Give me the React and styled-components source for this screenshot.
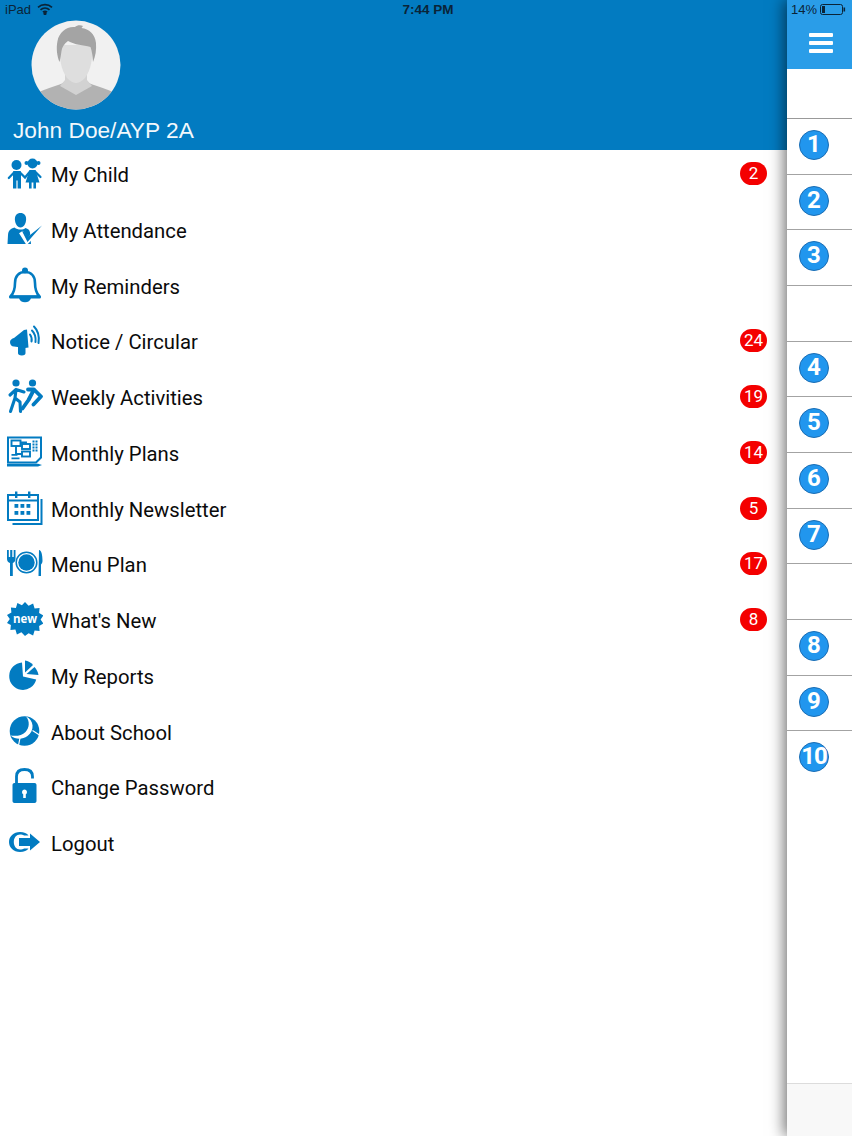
import styled, { createGlobalStyle } from 'styled-components'

const BLUE = '#027bc1'

const Global = createGlobalStyle`
  html, body {
    margin: 0;
    padding: 0;
    background: #fff;
    overflow: hidden;
  }
  * {
    box-sizing: border-box;
  }
`

const Page = styled.div`
  position: relative;
  display: flex;
  width: 852px;
  height: 1136px;
  overflow: hidden;
  font-family: 'Liberation Sans', Arial, sans-serif;
`

const StatusBar = styled.div`
  position: absolute;
  top: 0;
  left: 0;
  right: 0;
  height: 18px;
  z-index: 3;
  display: flex;
  align-items: center;
  padding: 0 5px;
  font-size: 13px;
  color: #0a2438;
`

const StatusLeft = styled.div`
  display: flex;
  align-items: center;
  gap: 6px;
  width: 393px;
`

const StatusTime = styled.div`
  width: 60px;
  text-align: center;
  font-weight: 700;
  font-size: 13.5px;
  white-space: nowrap;
`

const StatusRight = styled.div`
  display: flex;
  align-items: center;
  gap: 3px;
  margin-left: auto;
  padding-right: 1px;
`

const Drawer = styled.div`
  flex: 0 0 787px;
  display: flex;
  flex-direction: column;
`

const Header = styled.header`
  height: 150px;
  background: ${BLUE};
  padding: 20px 0 0 13px;
`

const Avatar = styled.svg`
  display: block;
  width: 90px;
  height: 90px;
  margin-left: 18px;
`

const UserName = styled.div`
  margin-top: 7px;
  font-size: 22.7px;
  line-height: 26px;
  color: #f2f8fc;
`

const Menu = styled.nav`
  display: flex;
  flex-direction: column;
`

const Row = styled.div`
  height: 55.75px;
  display: flex;
  align-items: flex-start;
  padding: 5px 20px 0 7px;
  gap: 8px;
`

const Icon = styled.svg`
  flex: 0 0 36px;
  width: 36px;
  height: 36px;
  fill: ${BLUE};
`

const Label = styled.span`
  font-family: Roboto, 'Liberation Sans', sans-serif;
  font-size: 20.3px;
  line-height: 40px;
  color: #0b0b0b;
`

const Badge = styled.span`
  margin-left: auto;
  margin-top: 7px;
  min-width: 27px;
  height: 23px;
  border-radius: 12px;
  background: #f40000;
  color: #fff;
  font-family: Roboto, 'Liberation Sans', sans-serif;
  font-size: 17px;
  line-height: 23px;
  text-align: center;
`

const Rail = styled.aside`
  flex: 0 0 65px;
  display: flex;
  flex-direction: column;
  background: #fff;
  box-shadow: -3px 0 14px rgba(0, 0, 0, 0.55);
  z-index: 2;
`

const MenuButton = styled.div`
  height: 69px;
  background: #2a9de8;
  display: flex;
  align-items: flex-end;
  padding: 0 0 16px 22px;
`

const Bars = styled.div`
  width: 24px;
  height: 20px;
  display: flex;
  flex-direction: column;
  justify-content: space-between;

  span {
    height: 4px;
    border-radius: 1px;
    background: #fff;
  }
`

const RailSpacer = styled.div`
  height: 49.9px;
  border-bottom: 1px solid #999;
`

const RailRow = styled.div`
  height: 55.7px;
  display: flex;
  align-items: flex-start;
  padding: 11px 0 0 12px;
  border-bottom: ${(p) => (p.$last ? 'none' : '1px solid #a3a3a3')};
`

const Dot = styled.div`
  width: 30px;
  height: 30px;
  border-radius: 50%;
  background: #2196ee;
  border: 1px solid #1a6db4;
  color: #fff;
  font-family: Roboto, 'Liberation Sans', sans-serif;
  font-size: 24px;
  font-weight: 700;
  line-height: 27px;
  text-align: center;
  letter-spacing: ${(p) => (p.$wide ? '-1px' : '0')};
`

const RailFooter = styled.div`
  margin-top: auto;
  height: 53px;
  background: #f8f8f8;
  border-top: 1px solid #dcdcdc;
`

const Child = () => (
  <Icon viewBox="0 0 36 36">
    <circle cx="9.500" cy="10" r="5" />
    <rect x="6" y="16" width="8" height="9.500" rx="1" />
    <rect x="6" y="24" width="3.400" height="9.500" />
    <rect x="10.600" y="24" width="3.400" height="9.500" />
    <circle cx="25.500" cy="8.500" r="5" />
    <circle cx="19.500" cy="8" r="2" />
    <circle cx="31.500" cy="8" r="2" />
    <path d="M22.500 15h6l4 12.500H18.500Z" />
    <rect x="22" y="26" width="2.600" height="7.500" />
    <rect x="26.400" y="26" width="2.600" height="7.500" />
    <path
      d="M7 17.500L1.800 23M13 17.500L18 22.500L23 16.500M28 16.500L33.500 22"
      fill="none"
      stroke={BLUE}
      strokeWidth="2.200"
      strokeLinecap="round"
    />
  </Icon>
)

const Attendance = () => (
  <Icon viewBox="0 0 36 36">
    <path d="M13.500 2c3.600 0 5.800 2.500 5.600 6.500-.2 4-2.200 8-5.600 8s-5.400-4-5.600-8C7.700 4.500 9.900 2 13.500 2Z" />
    <path d="M7.500 16.500c1.700 1.500 3.700 2 6 2 2.300 0 3.700-.5 5-1.500 2.500.8 4 2 4.500 4.500l1 11.500H.5l.5-9c.3-4.500 2.500-6.500 6.500-7.500Z" />
    <path d="M14 21l6 9.500L35 15" fill="none" stroke="#fff" strokeWidth="4.600" />
    <path d="M15 20l2 .5 3.500 5.500L35 14.500 20.500 31Z" />
  </Icon>
)

const Bell = () => (
  <Icon viewBox="0 0 36 36">
    <path
      d="M3.500 29.500C7 26 8 22 8 16 8 9 12 5 18 5s10 4 10 11c0 6 1 10 4.500 13.500Z"
      fill="none"
      stroke={BLUE}
      strokeWidth="2.600"
      strokeLinejoin="round"
    />
    <circle cx="18" cy="3.500" r="3" />
    <rect x="2" y="28.400" width="32" height="3" rx="1.500" />
    <path d="M12 31h12c-.5 2.700-3 4.300-6 4.300s-5.500-1.600-6-4.300Z" />
  </Icon>
)

const Megaphone = () => (
  <Icon viewBox="0 0 36 36">
    <path d="M3 20c0-2 2-3.500 4-4l10-8 3-.5 1.500 18-3.500.5-11-1.500C4.500 24.500 3 22.500 3 20Z" />
    <path d="M11 24h7.500v7c0 1.500-1 2.500-3.700 2.500S11 32.500 11 31Z" />
    <g fill="none" stroke={BLUE} strokeWidth="2" strokeLinecap="round">
      <path d="M23 12.500c1.500 2 2 4.500 1.500 7" />
      <path d="M25 8.500c3 3 4 7 3.500 11.500" />
      <path d="M27 4.500c4 4 5.500 10 4.500 16.500" />
    </g>
  </Icon>
)

const Activities = () => (
  <Icon viewBox="0 0 36 36">
    <circle cx="9" cy="5" r="3.600" />
    <circle cx="25.500" cy="5" r="3.600" />
    <path
      d="M9 11.500L8 20L3.500 33.500M8 20L13 24L13.500 33.500M9 11.500L3 17M9 11.500L17 14"
      fill="none"
      stroke={BLUE}
      strokeWidth="3.100"
      strokeLinecap="round"
      strokeLinejoin="round"
    />
    <path
      d="M21 11.500H27L21.500 22L15.500 30.500M27 11.500L34 18.500L26.500 26.500"
      fill="none"
      stroke={BLUE}
      strokeWidth="3.800"
      strokeLinecap="round"
      strokeLinejoin="round"
    />
  </Icon>
)

const Plans = () => (
  <Icon viewBox="0 0 36 36">
    <path d="M1 3.500h33v20l-5 5H1Z" fill="none" stroke={BLUE} strokeWidth="2" />
    <g fill="none" stroke={BLUE} strokeWidth="1.900">
      <rect x="4.500" y="6.500" width="9" height="5.500" />
      <rect x="15" y="10" width="8" height="5" />
      <rect x="15" y="17.500" width="8" height="5" />
      <path d="M13.500 8.500H19V10M9 12V20H15" />
    </g>
    {[6.500, 9.500, 12.500, 15.500].map((y) =>
      [25.500, 28.500].map((x) => <rect key={`${x}-${y}`} x={x} y={y} width="2" height="2" />)
    )}
    <path d="M4.500 20h6v1.700h-6ZM4.500 23.500h8v1.700h-8Z" />
    <path d="M0 29.800h31l4 1.300-4 1.300H0Z" />
  </Icon>
)

const Calendar = () => (
  <Icon viewBox="0 0 36 36">
    <g fill="none" stroke={BLUE} strokeWidth="2">
      <rect x="1" y="5" width="30" height="25" />
      <path d="M34.500 9v25H5.500" />
      <path d="M1 10.500h30" />
    </g>
    <rect x="8" y="1.500" width="2.400" height="6.500" />
    <rect x="21" y="1.500" width="2.400" height="6.500" />
    {[7.500, 13.500, 19.500].map((x) =>
      [14, 21].map((y) => <rect key={`${x}-${y}`} x={x} y={y} width="3.800" height="3.800" />)
    )}
  </Icon>
)

const MenuPlan = () => (
  <Icon viewBox="0 0 36 36">
    <path d="M0 5h1.800v7h1.400V5h2.100v7h1.400V5H8.500v9c0 2.200-1.500 3.500-2.700 4v13H3V18C1.500 17.500 0 16.200 0 14Z" />
    <circle cx="19.500" cy="17.500" r="10.300" fill="none" stroke={BLUE} strokeWidth="1.500" />
    <circle cx="19.500" cy="17.500" r="8.200" />
    <path d="M32 5c2.500 0 3.500 5 3.500 11 0 2-1 3-1.500 3.500V31h-2.500Z" />
  </Icon>
)

const NewBadge = () => (
  <Icon viewBox="0 0 36 36">
    <path d="M18 1l3.600 3.800 4.500-2.300 1.500 4.900 5-.3-.5 5 4.300 2.400-2.800 4 2.800 4-4.300 2.400.5 5-5-.3-1.500 4.900-4.500-2.300L18 35l-3.600-3.800-4.500 2.300-1.500-4.900-5 .3.500-5L0 22l2.800-4L0 14l4.400-2.400-.5-5 5 .3 1.500-4.900 4.500 2.300Z" />
    <text
      x="18"
      y="21.500"
      textAnchor="middle"
      fontFamily="'Open Sans', sans-serif"
      fontSize="11.500"
      fontWeight="700"
      fill="#fff"
    >
      new
    </text>
  </Icon>
)

const Reports = () => (
  <Icon viewBox="0 0 36 36">
    <path d="M15 5.500A13.700 13.700 0 1 0 29.200 22.500L16 19.500Z" />
    <path d="M18 3.500V15.500L26 8C24 5.500 21 4 18 3.500Z" />
    <path d="M19.500 17L27.500 10C29.500 12 31 15 31.500 18Z" />
  </Icon>
)

const About = () => (
  <Icon viewBox="0 0 36 36">
    <circle cx="17.500" cy="18" r="14.800" />
    <path d="M19 3.500c8 3.500 9 14 1.500 19.500-5.500 4-12 3.500-17-.5 6 1 11.500 0 15-3.500 4-4 4.500-11 .5-15.500Z" fill="#fff" />
    <path d="M13 25L11.500 32.500M25.500 17.500L32.500 22" stroke="#fff" strokeWidth="1.200" fill="none" />
  </Icon>
)

const Lock = () => (
  <Icon viewBox="0 0 36 36">
    <path
      d="M9.500 16V8.500C9.500 4 12.500 1.500 17.500 1.500s8 2.500 8 7v2"
      fill="none"
      stroke={BLUE}
      strokeWidth="2.800"
    />
    <path
      fillRule="evenodd"
      d="M7.500 15h20c1.200 0 2 .8 2 2v16c0 1.200-.8 2-2 2h-20c-1.200 0-2-.8-2-2V17c0-1.200.8-2 2-2ZM17.500 21.500a2.600 2.600 0 0 0-1.300 4.800V30h2.600v-3.700A2.600 2.600 0 0 0 17.500 21.500Z"
    />
  </Icon>
)

const Logout = () => (
  <Icon viewBox="0 0 36 36">
    <path d="M21.500 11.500C20 9.500 17 8 13 8 6.500 8 2 12.500 2 18s4.500 10 11 10c4 0 7-1.500 8.500-3.500h-4.500c-1 .7-2.300 1-4 1-3.500 0-6.200-3-6.200-7.500s2.700-7.500 6.200-7.500c1.700 0 3 .3 4 1Z" />
    <path d="M12 14h11V9.500L33 18l-10 8.500V22H12Z" />
  </Icon>
)

const WifiIcon = () => (
  <svg width="16" height="12" viewBox="0 0 16 12" fill="none" stroke="#0a2438" strokeWidth="1.700">
    <path d="M1 4.300c4-3.600 10-3.600 14 0M3.500 6.800c2.600-2.200 6.400-2.200 9 0M5.900 9.100c1.300-1 2.900-1 4.200 0" />
    <circle cx="8" cy="10.500" r="0.800" fill="#0a2438" />
  </svg>
)

const Battery = () => (
  <svg width="26" height="11" viewBox="0 0 26 11">
    <rect x="0.500" y="0.500" width="22" height="10" rx="2" fill="none" stroke="#0a2438" />
    <rect x="2" y="2" width="3" height="7" fill="#0a2438" />
    <rect x="23.500" y="3.500" width="1.600" height="4" fill="#0a2438" />
  </svg>
)

const items = [
  { label: 'My Child', icon: Child, count: 2 },
  { label: 'My Attendance', icon: Attendance },
  { label: 'My Reminders', icon: Bell },
  { label: 'Notice / Circular', icon: Megaphone, count: 24 },
  { label: 'Weekly Activities', icon: Activities, count: 19 },
  { label: 'Monthly Plans', icon: Plans, count: 14 },
  { label: 'Monthly Newsletter', icon: Calendar, count: 5 },
  { label: 'Menu Plan', icon: MenuPlan, count: 17 },
  { label: "What's New", icon: NewBadge, count: 8 },
  { label: 'My Reports', icon: Reports },
  { label: 'About School', icon: About },
  { label: 'Change Password', icon: Lock },
  { label: 'Logout', icon: Logout },
]

const railRows = [1, 2, 3, null, 4, 5, 6, 7, null, 8, 9, 10]

const App = () => (
  <Page>
    <Global />
    <StatusBar>
      <StatusLeft>
        iPad
        <WifiIcon />
      </StatusLeft>
      <StatusTime>7:44 PM</StatusTime>
      <StatusRight>
        14%
        <Battery />
      </StatusRight>
    </StatusBar>
    <Drawer>
      <Header>
        <Avatar viewBox="0 0 90 90">
          <defs>
            <clipPath id="face">
              <circle cx="45" cy="45" r="44.500" />
            </clipPath>
          </defs>
          <circle cx="45" cy="45" r="44.500" fill="#f1f1f1" />
          <g clipPath="url(#face)">
            <path d="M8 72c6-3 14-5 22-8l5-3h20l5 3c8 3 16 5 22 8v20H8Z" fill="#b2b2b2" />
            <path d="M34 48h22v12l5 6-16 9-16-9 5-6Z" fill="#d2d2d2" />
            <path d="M29 25H61C62 38 60 50 54 58 50 62 47 63 45 63 43 63 40 62 36 58 30 50 28 38 29 25Z" fill="#dedede" />
            <path d="M28.500 42C26 36 25 28 26.500 21 28 12 36 6 44 7 46 5 50 5 52 6L50.500 8C58 9 64 14 65 23 65.500 30 64.500 36 62 42 61.500 36 61 31 59.500 27 52 25 44 25 37 21 33 24 31 27 30.500 31 30 35 29.500 38 28.500 42Z" fill="#a4a4a4" />
          </g>
        </Avatar>
        <UserName>John Doe/AYP 2A</UserName>
      </Header>
      <Menu>
        {items.map((item) => (
          <Row key={item.label}>
            <item.icon />
            <Label>{item.label}</Label>
            {item.count ? <Badge>{item.count}</Badge> : null}
          </Row>
        ))}
      </Menu>
    </Drawer>
    <Rail>
      <MenuButton>
        <Bars>
          <span />
          <span />
          <span />
        </Bars>
      </MenuButton>
      <RailSpacer />
      {railRows.map((n, i) => (
        <RailRow key={i} $last={i === railRows.length - 1}>
          {n ? <Dot $wide={n > 9}>{n}</Dot> : null}
        </RailRow>
      ))}
      <RailFooter />
    </Rail>
  </Page>
)

export default App
